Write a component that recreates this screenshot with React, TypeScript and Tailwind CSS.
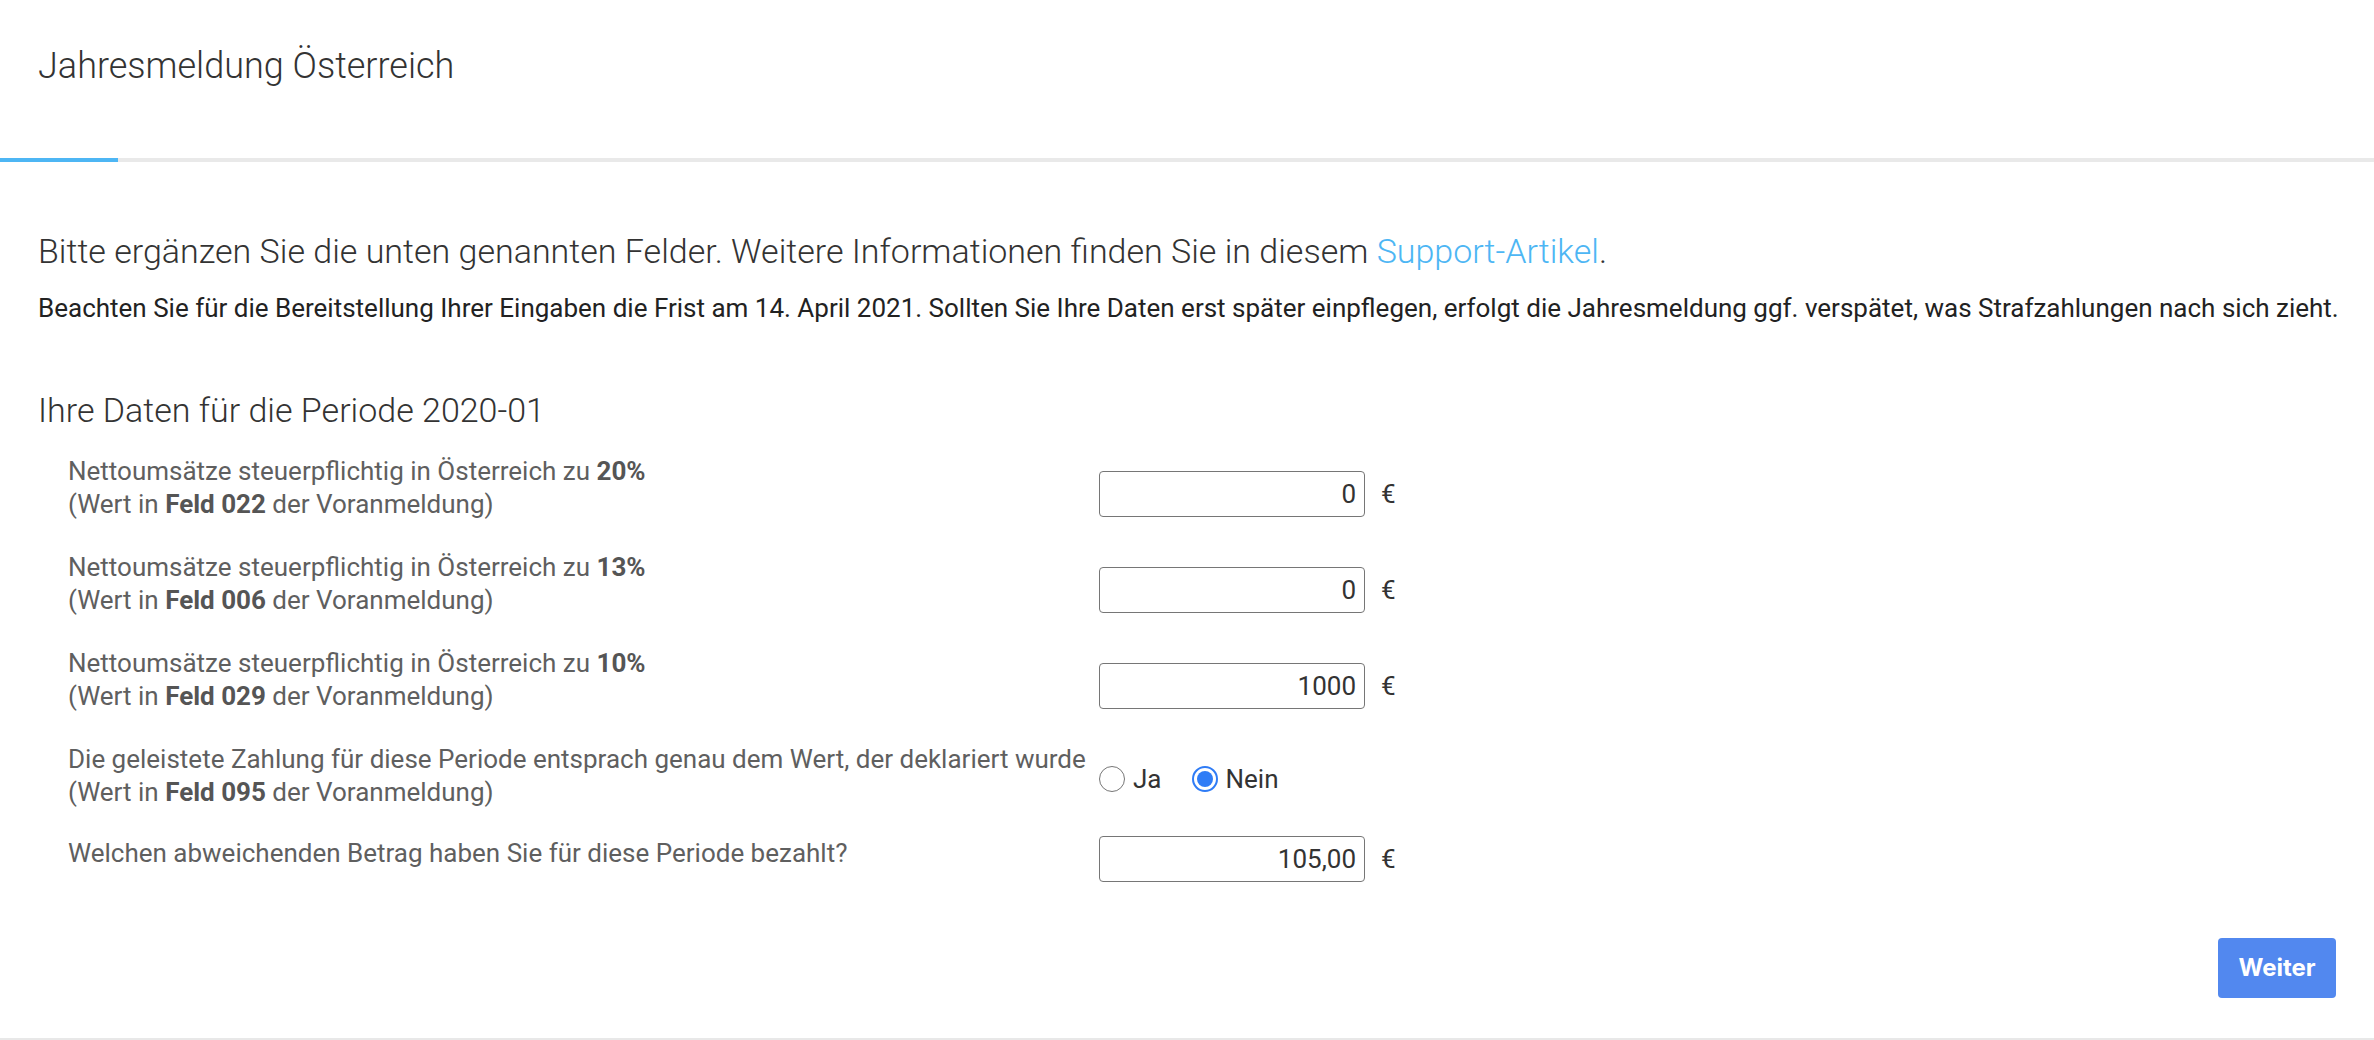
import React from "react";

const font = { fontFamily: "Roboto, 'Liberation Sans', sans-serif" };

function Amount({ value }: { value: string }) {
  return (
    <div className="flex items-center mt-3">
      <input
        readOnly
        value={value}
        className="w-[266px] h-[46px] border-[1.5px] border-[#767676] rounded-[4px] text-right pr-[8px] text-[26px] text-[#333] bg-white outline-none"
        style={font}
      />
      <span className="ml-[16px] text-[26px] text-[#333]">€</span>
    </div>
  );
}

function Label({ children }: { children: React.ReactNode }) {
  return (
    <div className="w-[1061px] shrink-0 pl-[30px] text-[26px] leading-[33px] text-[#5f5f5f] whitespace-nowrap">
      {children}
    </div>
  );
}

function Radio({ checked, label }: { checked?: boolean; label: string }) {
  return (
    <label className="flex items-center">
      {checked ? (
        <span className="w-[26px] h-[26px] rounded-full border-2 border-[#2f7cf6] bg-white flex items-center justify-center">
          <span className="w-[16px] h-[16px] rounded-full bg-[#2f7cf6]" />
        </span>
      ) : (
        <span className="w-[26px] h-[26px] rounded-full border-[1.5px] border-[#767676] bg-white" />
      )}
      <span className="ml-[8px] text-[26px] text-[#333] leading-[26px]">{label}</span>
    </label>
  );
}

export default function App() {
  return (
    <div className="w-[2374px] bg-white border-b-2 border-[#e8e8e8]" style={font}>
      <div className="h-[158px] pt-[46px] px-[38px]">
        <h1 className="text-[36px] leading-[40px] font-light text-[#333]">Jahresmeldung Österreich</h1>
      </div>
      <div className="h-[4px] bg-[#e9e9e9] flex">
        <div className="w-[118px] h-full bg-[#4db6f4]" />
      </div>

      <div className="px-[38px] pt-[71px] pb-[40px]">
        <p className="text-[34px] leading-[36px] font-light text-[#333] whitespace-nowrap">
          Bitte ergänzen Sie die unten genannten Felder. Weitere Informationen finden Sie in diesem{" "}
          <a className="text-[#4db6f4]">Support-Artikel</a>.
        </p>
        <p className="mt-[25px] text-[26px] leading-[28px] text-[#222] whitespace-nowrap">
          Beachten Sie für die Bereitstellung Ihrer Eingaben die Frist am 14. April 2021. Sollten Sie Ihre Daten erst später einpflegen, erfolgt die Jahresmeldung ggf. verspätet, was Strafzahlungen nach sich zieht.
        </p>

        <h2 className="mt-[69px] text-[34px] leading-[38px] font-light text-[#333]">Ihre Daten für die Periode 2020-01</h2>

        <div className="mt-[26px] flex flex-col">
          <div className="flex items-center">
            <Label>
              Nettoumsätze steuerpflichtig in Österreich zu <b className="font-bold text-[#555]">20%</b>
              <br />
              (Wert in <b className="font-bold text-[#555]">Feld 022</b> der Voranmeldung)
            </Label>
            <Amount value="0" />
          </div>
          <div className="flex items-center mt-[30px]">
            <Label>
              Nettoumsätze steuerpflichtig in Österreich zu <b className="font-bold text-[#555]">13%</b>
              <br />
              (Wert in <b className="font-bold text-[#555]">Feld 006</b> der Voranmeldung)
            </Label>
            <Amount value="0" />
          </div>
          <div className="flex items-center mt-[30px]">
            <Label>
              Nettoumsätze steuerpflichtig in Österreich zu <b className="font-bold text-[#555]">10%</b>
              <br />
              (Wert in <b className="font-bold text-[#555]">Feld 029</b> der Voranmeldung)
            </Label>
            <Amount value="1000" />
          </div>
          <div className="flex items-center mt-[30px]">
            <Label>
              Die geleistete Zahlung für diese Periode entsprach genau dem Wert, der deklariert wurde
              <br />
              (Wert in <b className="font-bold text-[#555]">Feld 095</b> der Voranmeldung)
            </Label>
            <div className="flex items-center mt-[6px] gap-[30px]">
              <Radio label="Ja" />
              <Radio checked label="Nein" />
            </div>
          </div>
          <div className="flex items-center mt-[15px]">
            <Label>Welchen abweichenden Betrag haben Sie für diese Periode bezahlt?</Label>
            <Amount value="105,00" />
          </div>
        </div>

        <div className="mt-[56px] flex justify-end">
          <button
            className="w-[118px] h-[60px] rounded-[4px] bg-[#5288ef] text-white text-[24px] font-bold"
            style={{ fontFamily: "Inter, 'Liberation Sans', sans-serif" }}
          >
            Weiter
          </button>
        </div>
      </div>
    </div>
  );
}
